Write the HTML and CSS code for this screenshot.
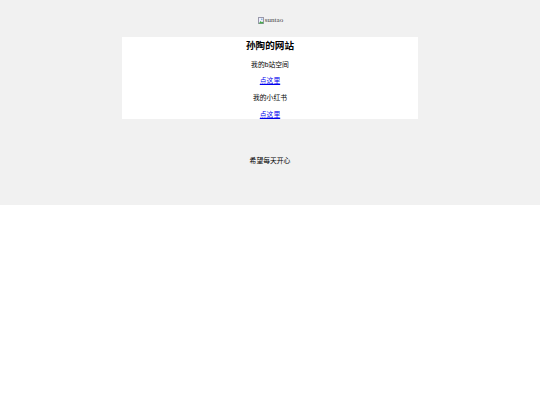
FILE: index.html
```html
<!DOCTYPE html>
<html lang="zh">
<head>
<meta charset="utf-8">
<title>孙陶的网站</title>
<link rel="stylesheet" href="styles.css">
</head>
<body>
<div class="page">
  <div class="logo">
    <svg class="broken" width="6" height="7" viewBox="0 0 6 7"><rect x="0.5" y="0.5" width="5" height="6" fill="#eef" stroke="#99a" stroke-width="1"/><path d="M0.8 6.5 L2.6 4 L3.8 5.3 L5.2 4.4 L5.2 6.5 Z" fill="#4a4"/><circle cx="3.8" cy="2.2" r="0.8" fill="#7ac"/></svg><span class="alt">suntao</span>
  </div>
  <div class="card">
    <h1 class="title">孙陶的网站</h1>
    <p class="text">我的b站空间</p>
    <p class="text"><a href="#">点这里</a></p>
    <p class="text">我的小红书</p>
    <p class="text"><a href="#">点这里</a></p>
  </div>
  <p class="footer">希望每天开心</p>
</div>
</body>
</html>
```
FILE: styles.css
```css
html, body {
  margin: 0;
  padding: 0;
  background: #ffffff;
}
.page {
  background: #f1f1f1;
  height: 205px;
  padding-top: 15px;
  box-sizing: border-box;
  font-family: "Liberation Sans", "Noto Sans CJK SC", sans-serif;
  color: #000;
}
.logo {
  display: flex;
  justify-content: center;
  align-items: center;
  gap: 1px;
  height: 10px;
  margin-left: 1px;
}
.broken {
  display: block;
}
.alt {
  font-family: "Liberation Serif", serif;
  font-size: 7px;
  color: #444;
  line-height: 10px;
}
.card {
  width: 296px;
  margin: 12px auto 0;
  background: #ffffff;
  display: flex;
  flex-direction: column;
  align-items: center;
  gap: 6.7px;
  height: 82px;
  box-sizing: border-box;
}
.title {
  margin: 1px 0 -1px;
  font-size: 9.6px;
  font-weight: bold;
  line-height: 16px;
}
.text {
  margin: 0;
  font-size: 6.8px;
  line-height: 10px;
}
.text a {
  color: #0000ee;
  text-decoration: underline;
}
.footer {
  margin: 37px 0 0;
  text-align: center;
  font-size: 6.8px;
  line-height: 10px;
}
```
